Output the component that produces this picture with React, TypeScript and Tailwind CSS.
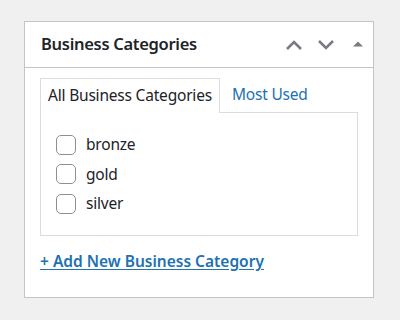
import React from "react";

const font = { fontFamily: '"Noto Sans", "Open Sans", sans-serif' };

function Check({ label }: { label: string }) {
  return (
    <div className="flex h-[29.5px] items-center">
      <span className="box-border h-[20px] w-[20px] rounded-[5px] border border-[#8c8f94] bg-white" />
      <span className="ml-[10px] text-[15.5px] tracking-[-0.2px] text-[#1d2327]">{label}</span>
    </div>
  );
}

export default function App() {
  return (
    <div className="h-[320px] w-[400px] bg-[#f0f0f1] pl-[24px] pt-[21px]" style={font}>
      <div className="box-border h-[277px] w-[350px] border border-[#c3c4c7] bg-white">
        <div className="box-border flex h-[46px] items-center border-b border-[#c3c4c7] pl-[16px] pr-[10px]">
          <h2 className="flex-1 text-[16.5px] font-semibold tracking-[-0.3px] text-[#1d2327]">Business Categories</h2>
          <svg width="18" height="12" viewBox="0 0 18 12" className="mr-[14px]">
            <path d="M2 10 L9 3 L16 10" fill="none" stroke="#787c82" strokeWidth="2.6" />
          </svg>
          <svg width="18" height="12" viewBox="0 0 18 12" className="mr-[18px]">
            <path d="M2 2 L9 9 L16 2" fill="none" stroke="#787c82" strokeWidth="2.6" />
          </svg>
          <svg width="10" height="6" viewBox="0 0 10 6" className="-mt-[2px]">
            <path d="M0 5.5 L5 0.5 L10 5.5 Z" fill="#787c82" />
          </svg>
        </div>
        <div className="px-[15px] pt-[10px]">
          <div className="flex">
            <div className="relative z-10 box-border flex h-[35px] items-center border border-b-0 border-[#dcdcde] bg-white px-[7px] text-[15.5px] tracking-[-0.2px] text-[#1d2327]">
              All Business Categories
            </div>
            <div className="flex h-[35px] flex-1 items-center border-b border-[#dcdcde] pl-[12px] text-[15.5px] tracking-[-0.2px] text-[#2271b1]">
              Most Used
            </div>
          </div>
          <div className="-mt-px box-border h-[124px] border border-[#dcdcde] pl-[15px] pt-[17px]">
            <Check label="bronze" />
            <Check label="gold" />
            <Check label="silver" />
          </div>
          <div className="mt-[13px]">
            <a className="text-[15.5px] font-semibold text-[#2271b1] underline underline-offset-[2px]">
              + Add New Business Category
            </a>
          </div>
        </div>
      </div>
    </div>
  );
}
